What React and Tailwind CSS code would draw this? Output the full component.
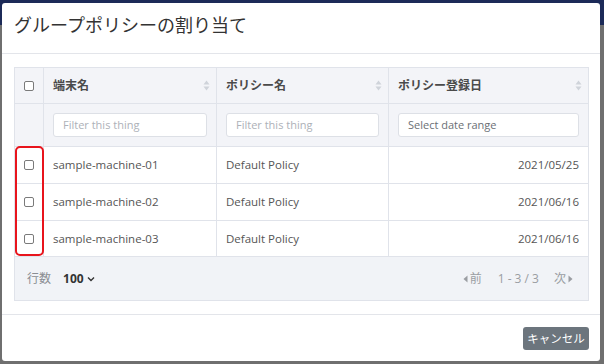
import React from "react";

const font = { fontFamily: '"Open Sans", "Noto Sans CJK JP", sans-serif' };

function Check() {
  return <span className="block w-[10px] h-[10px] border border-[#7a7a7a] rounded-[2px] bg-white" />;
}

function SortIcon() {
  return (
    <svg width="7" height="11" viewBox="0 0 7 11" className="shrink-0">
      <path d="M3.5 0.5 L6.5 4.5 L0.5 4.5 Z" fill="#cfd3da" />
      <path d="M3.5 10.5 L6.5 6.5 L0.5 6.5 Z" fill="#cfd3da" />
    </svg>
  );
}

const rows = [
  ["sample-machine-01", "Default Policy", "2021/05/25"],
  ["sample-machine-02", "Default Policy", "2021/06/16"],
  ["sample-machine-03", "Default Policy", "2021/06/16"],
];

export default function App() {
  return (
    <div className="relative w-[604px] h-[364px] overflow-hidden bg-[#6f6f6f]" style={font}>
      <div className="h-[25px] bg-[#1c2a58]" />
      <div className="absolute left-[2px] top-[3px] w-[598px] h-[358px] bg-white rounded-[3px] flex flex-col">
        {/* header */}
        <div className="h-[51px] border-b border-[#e3e5ea] pl-3 pt-[9px]">
          <div className="text-[18px] leading-[26px] text-[#333]">グループポリシーの割り当て</div>
        </div>
        {/* body */}
        <div className="pl-3 pr-[11px] pt-[13px] pb-[13px]">
          <div className="relative border border-[#e0e3ea] text-[12px]">
            {/* head */}
            <div className="grid grid-cols-[29px_173px_172px_1fr] h-[36px] bg-[#f3f4f8] border-b border-[#e0e3ea]">
              <div className="border-r border-[#e0e3ea] flex items-center justify-center"><Check /></div>
              <div className="border-r border-[#e0e3ea] flex items-center justify-between pl-[9px] pr-[6px] font-bold text-[#4a4a4a]">
                <span>端末名</span><SortIcon />
              </div>
              <div className="border-r border-[#e0e3ea] flex items-center justify-between pl-[9px] pr-[6px] font-bold text-[#4a4a4a]">
                <span>ポリシー名</span><SortIcon />
              </div>
              <div className="flex items-center justify-between pl-[9px] pr-[6px] font-bold text-[#4a4a4a]">
                <span>ポリシー登録日</span><SortIcon />
              </div>
            </div>
            {/* filter */}
            <div className="grid grid-cols-[29px_173px_172px_1fr] h-[43px] bg-[#f3f4f8] border-b border-[#e0e3ea]">
              <div className="border-r border-[#e0e3ea]" />
              <div className="border-r border-[#e0e3ea] flex items-center px-[9px]">
                <div className="w-full h-[24px] bg-white border border-[#dde0e6] rounded-[3px] flex items-center pl-[9px] text-[11px] text-[#adb1b8]">Filter this thing</div>
              </div>
              <div className="border-r border-[#e0e3ea] flex items-center px-[9px]">
                <div className="w-full h-[24px] bg-white border border-[#dde0e6] rounded-[3px] flex items-center pl-[9px] text-[11px] text-[#adb1b8]">Filter this thing</div>
              </div>
              <div className="flex items-center px-[9px]">
                <div className="w-full h-[24px] bg-white border border-[#dde0e6] rounded-[3px] flex items-center pl-[9px] text-[11px] text-[#6b6f75]">Select date range</div>
              </div>
            </div>
            {rows.map((r, i) => (
              <div key={i} className={"grid grid-cols-[29px_173px_172px_1fr] bg-white border-b border-[#e0e3ea] text-[#555] text-[11.5px] " + (i === 2 ? "h-[36px]" : "h-[37px]")}>
                <div className="border-r border-[#e0e3ea] flex items-center justify-center"><Check /></div>
                <div className="border-r border-[#e0e3ea] flex items-center pl-[9px]">{r[0]}</div>
                <div className="border-r border-[#e0e3ea] flex items-center pl-[9px]">{r[1]}</div>
                <div className="flex items-center justify-end pr-[9px]">{r[2]}</div>
              </div>
            ))}
            {/* footer */}
            <div className="h-[43px] bg-[#f1f3f7] flex items-center justify-between pl-3 pr-[15px]">
              <div className="flex items-center">
                <span className="text-[#8a8d92]">行数</span>
                <span className="ml-[12px] font-bold text-[#333]">100</span>
                <svg width="8" height="6" viewBox="0 0 8 6" className="ml-[3px]">
                  <path d="M1 1.5 L4 4.5 L7 1.5" stroke="#333" strokeWidth="1.4" fill="none" />
                </svg>
              </div>
              <div className="flex items-center text-[#9a9da2]">
                <span className="flex items-center">
                  <svg width="5" height="8" viewBox="0 0 5 8" className="mr-[2px]"><path d="M4.5 0.5 L0.5 4 L4.5 7.5 Z" fill="#9a9da2" /></svg>
                  前
                </span>
                <span className="ml-[16px]">1 - 3 / 3</span>
                <span className="ml-[15px] flex items-center">
                  次
                  <svg width="5" height="8" viewBox="0 0 5 8" className="ml-[2px]"><path d="M0.5 0.5 L4.5 4 L0.5 7.5 Z" fill="#9a9da2" /></svg>
                </span>
              </div>
            </div>
            {/* highlight */}
            <div className="absolute left-0 top-[78px] w-[29px] h-[110px] border-2 border-[#e8141c] rounded-[5px] pointer-events-none" />
          </div>
        </div>
        {/* footer */}
        <div className="border-t border-[#e3e5ea] flex justify-end pr-[11px] pt-[12px]">
          <button className="h-[23px] w-[66px] flex items-center justify-center bg-[#6c757d] rounded-[3px] text-white text-[11.5px] leading-none whitespace-nowrap">キャンセル</button>
        </div>
      </div>
    </div>
  );
}
